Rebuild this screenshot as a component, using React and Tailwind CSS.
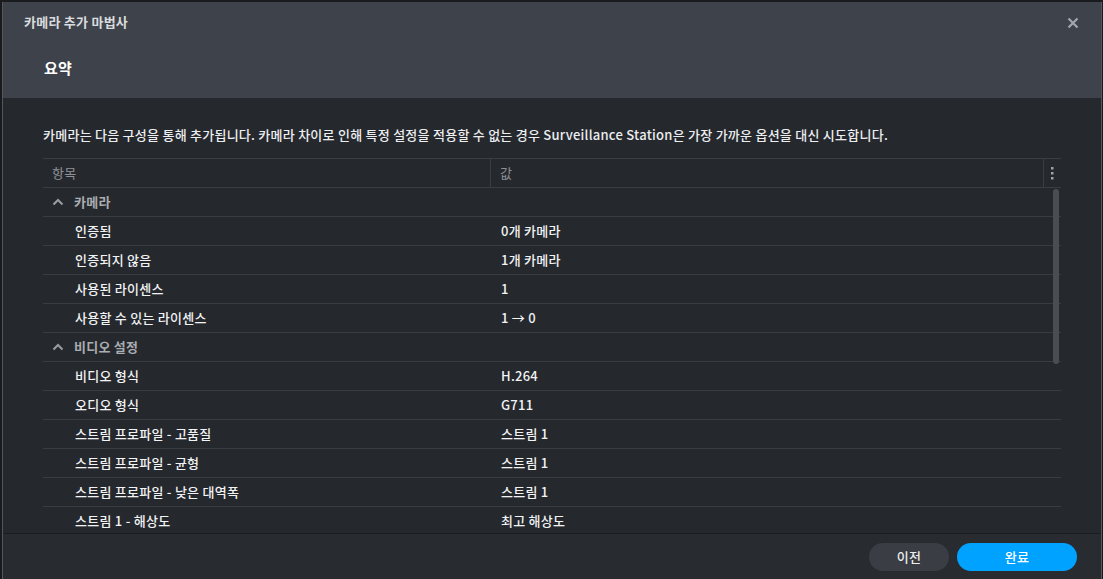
import React from "react";

const font = { fontFamily: '"Noto Sans CJK KR", "Noto Sans", sans-serif' };

const rows = [
  { g: true, k: "카메라" },
  { k: "인증됨", v: "0개 카메라" },
  { k: "인증되지 않음", v: "1개 카메라" },
  { k: "사용된 라이센스", v: "1" },
  { k: "사용할 수 있는 라이센스", v: "1 → 0" },
  { g: true, k: "비디오 설정" },
  { k: "비디오 형식", v: "H.264" },
  { k: "오디오 형식", v: "G711" },
  { k: "스트림 프로파일 - 고품질", v: "스트림 1" },
  { k: "스트림 프로파일 - 균형", v: "스트림 1" },
  { k: "스트림 프로파일 - 낮은 대역폭", v: "스트림 1" },
  { k: "스트림 1 - 해상도", v: "최고 해상도" },
];

function Chevron() {
  return (
    <svg width="12" height="12" viewBox="0 0 12 12" className="shrink-0">
      <path d="M1.5 8.5 L6 4 L10.5 8.5" fill="none" stroke="#9a9da2" strokeWidth="2" />
    </svg>
  );
}

export default function App() {
  return (
    <div className="w-[1103px] h-[579px] bg-[#1a1b1e] pt-[2px] pl-[2px] pr-[1px] overflow-hidden tracking-[0.25px]" style={font}>
      <div className="h-[577px] flex flex-col border-l border-r border-[#54575d] bg-[#25282d]">
        {/* header */}
        <div className="h-[96px] bg-[#3e434b] flex flex-col shrink-0">
          <div className="h-[40px] flex items-center justify-between pl-[21px] pr-[22px] pb-[1px]">
            <span className="text-[13px] font-bold text-[#d9dbde] leading-none">카메라 추가 마법사</span>
            <svg width="12" height="12" viewBox="0 0 12 12" className="mt-[2px]">
              <path d="M1.5 1.5 L10.5 10.5 M10.5 1.5 L1.5 10.5" stroke="#a3a6ab" strokeWidth="2.2" />
            </svg>
          </div>
          <div className="pl-[41px] pt-[13px]">
            <span className="text-[15px] font-bold text-white leading-none">요약</span>
          </div>
        </div>
        {/* body */}
        <div className="flex-1 flex flex-col px-[40px] pt-[28px] overflow-hidden">
          <div className="text-[13px] text-[#eceef0] leading-[18px] font-medium">
            카메라는 다음 구성을 통해 추가됩니다. 카메라 차이로 인해 특정 설정을 적용할 수 없는 경우 Surveillance Station은 가장 가까운 옵션을 대신 시도합니다.
          </div>
          <div className="mt-[14px] w-[1018px] border-t border-[#3a3d43] flex flex-col flex-1 overflow-hidden">
            <div className="h-[29px] flex border-b border-[#3a3d43] text-[13px] text-[#8e9196] shrink-0">
              <div className="w-[448px] pl-[9px] flex items-center border-r border-[#3a3d43]">항목</div>
              <div className="flex-1 pl-[9px] flex items-center border-r border-[#3a3d43]">값</div>
              <div className="w-[17px] flex items-center justify-center">
                <svg width="3" height="13" viewBox="0 0 3 13">
                  <rect x="0" y="0" width="2.5" height="2.5" fill="#9fa2a7" />
                  <rect x="0" y="5" width="2.5" height="2.5" fill="#9fa2a7" />
                  <rect x="0" y="10" width="2.5" height="2.5" fill="#9fa2a7" />
                </svg>
              </div>
            </div>
            <div className="relative flex-1 overflow-hidden">
              {rows.map((r, i) =>
                r.g ? (
                  <div key={i} className="h-[29px] flex items-center gap-[10px] pl-[9px] border-b border-[#393c42] text-[13px] font-bold text-[#a9acb1]">
                    <Chevron />
                    <span>{r.k}</span>
                  </div>
                ) : (
                  <div key={i} className="h-[29px] flex items-center border-b border-[#393c42] text-[13px] font-medium text-[#f2f3f4]">
                    <div className="w-[448px] pl-[32px]">{r.k}</div>
                    <div className="pl-[10px]">{r.v}</div>
                  </div>
                )
              )}
              <div className="absolute right-[2px] top-[1px] w-[6px] h-[175px] rounded-full bg-[#4a4d53]" />
            </div>
          </div>
        </div>
        {/* footer */}
        <div className="h-[46px] shrink-0 border-t border-[#1b1c20] bg-[#282b30] flex items-center justify-end gap-[8px] pr-[24px]">
          <button className="w-[80px] h-[28px] rounded-full bg-[#3a3d43] text-[13px] font-medium text-[#eceef0]">이전</button>
          <button className="w-[120px] h-[28px] rounded-full bg-[#00a2ff] text-[13px] font-medium text-white">완료</button>
        </div>
      </div>
    </div>
  );
}
